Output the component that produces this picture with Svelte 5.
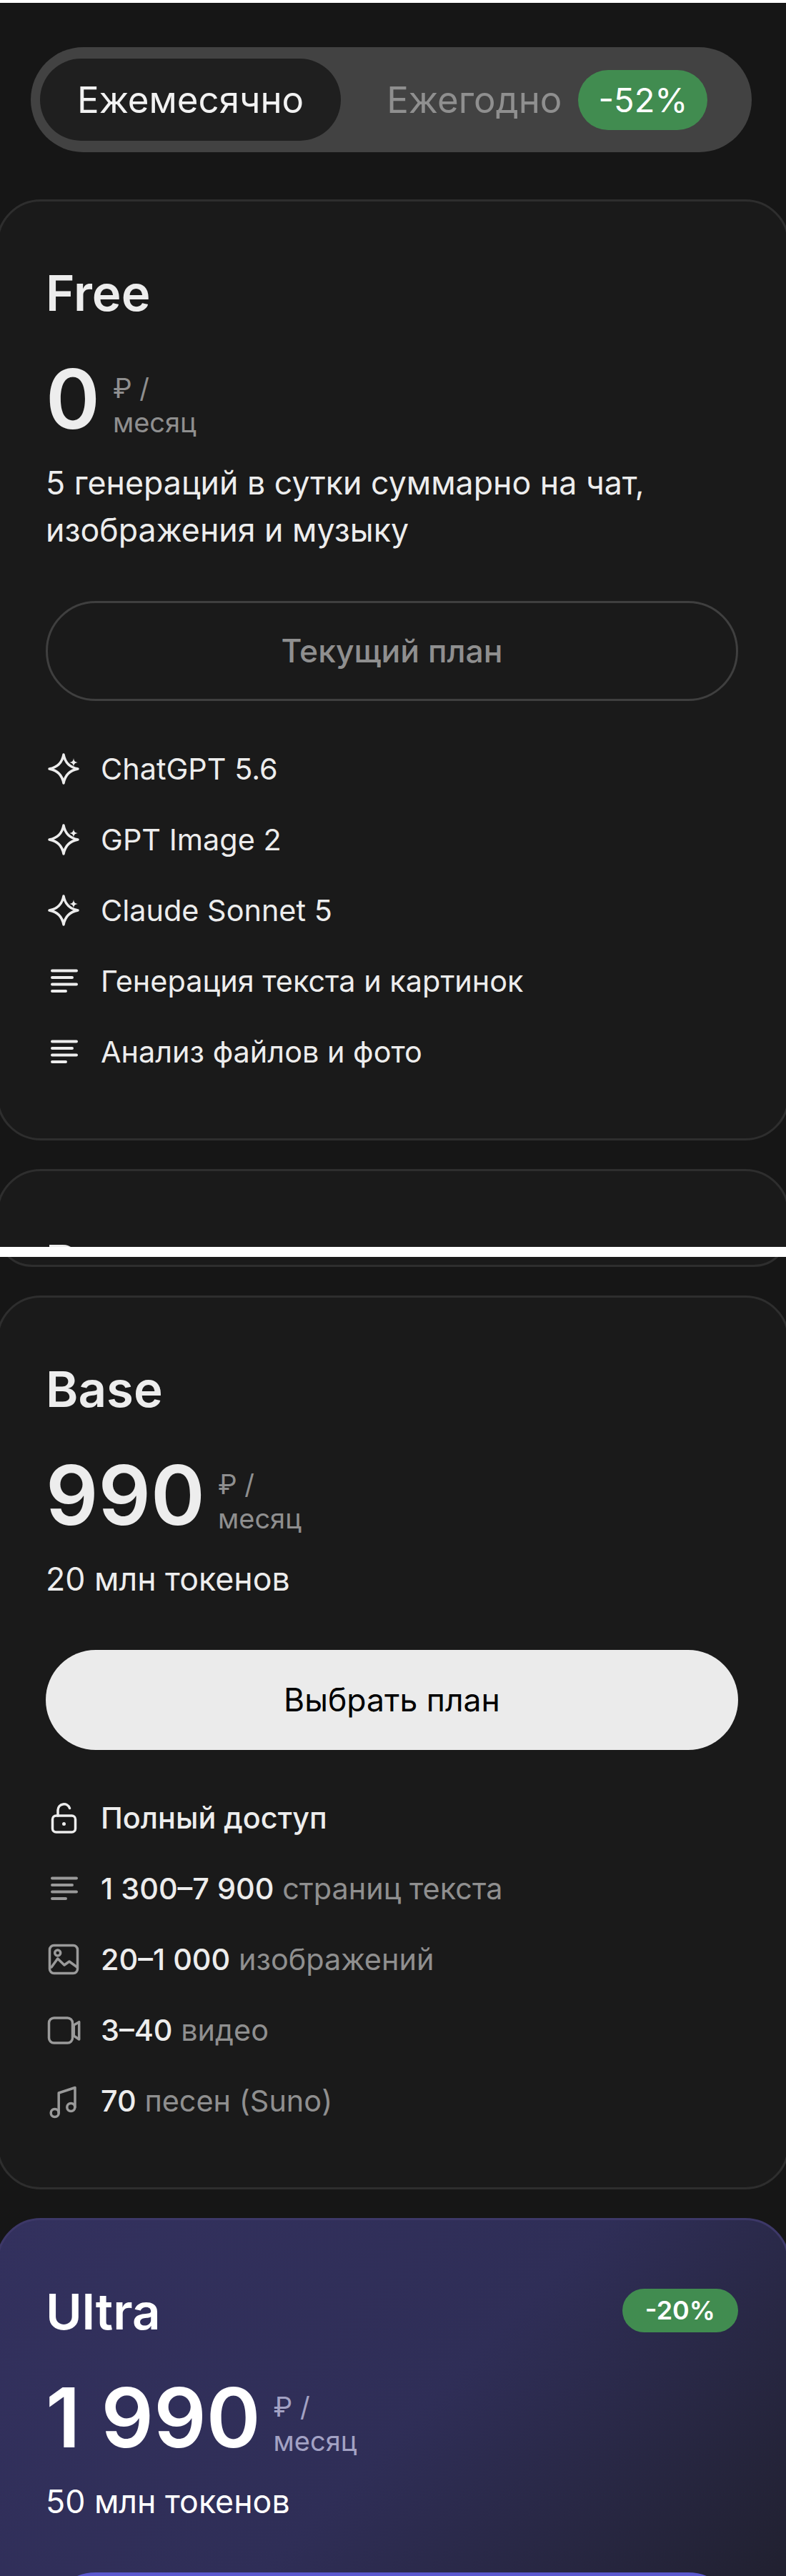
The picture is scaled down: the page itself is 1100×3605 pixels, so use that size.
<script>
  const free = [
    { icon: 'spark', text: 'ChatGPT 5.6' },
    { icon: 'spark', text: 'GPT Image 2' },
    { icon: 'spark', text: 'Claude Sonnet 5' },
    { icon: 'lines', text: 'Генерация текста и картинок' },
    { icon: 'lines', text: 'Анализ файлов и фото' },
  ]
  const base = [
    { icon: 'lock', strong: 'Полный доступ', text: '' },
    { icon: 'lines', strong: '1 300–7 900', text: 'страниц текста', dim: true },
    { icon: 'image', strong: '20–1 000', text: 'изображений', dim: true },
    { icon: 'video', strong: '3–40', text: 'видео', dim: true },
    { icon: 'music', strong: '70', text: 'песен (Suno)', dim: true },
  ]
</script>

{#snippet icon(name, dim)}
  <svg class="ico" class:dim viewBox="0 0 44 44" fill="none" stroke="currentColor" stroke-width="3.5" stroke-linecap="round" stroke-linejoin="round">
    {#if name === 'spark'}
      <path d="M22 2C24 13 31 20 42 22C31 24 24 31 22 42C20 31 13 24 2 22C13 20 20 13 22 2Z" />
      <path fill="currentColor" stroke="none" d="M36 7C36.7 11.3 37.7 12.3 42 13C37.7 13.7 36.7 14.7 36 19C35.3 14.7 34.3 13.7 30 13C34.3 12.3 35.3 11.3 36 7Z" />
    {:else if name === 'lines'}
      <path stroke-width="4" d="M6 7.5H40M6 17H34M6 26.5H40M6 36H25" />
    {:else if name === 'lock'}
      <rect x="6.5" y="19" width="32" height="23" rx="5" />
      <path d="M14 19V11a8.5 8.5 0 0 1 16.5-2.5" />
      <circle cx="22.5" cy="30.5" r="2.5" fill="currentColor" stroke="none" />
    {:else if name === 'image'}
      <rect x="2.5" y="2.5" width="39" height="39" rx="6" />
      <circle cx="13.7" cy="13" r="4" />
      <path d="M5 33L13.7 21L23 30L30 25L41 33" />
    {:else if name === 'video'}
      <rect x="1.5" y="5" width="33" height="35" rx="7" />
      <path d="M36.3 15L43.7 10.7V35L36.3 30Z" />
    {:else if name === 'music'}
      <circle cx="9.7" cy="39" r="5.5" />
      <circle cx="32.3" cy="31" r="5.5" />
      <path d="M15.2 39V11L38 3.5V31" />
    {/if}
  </svg>
{/snippet}

{#snippet price(amount)}
  <div class="price">
    <span class="amount">{amount}</span>
    <span class="unit">₽ /<br />месяц</span>
  </div>
{/snippet}

<div class="page">
  <section class="top">
    <div class="toggle">
      <span class="opt active">Ежемесячно</span>
      <span class="opt">Ежегодно</span>
      <span class="save">-52%</span>
    </div>

    <article class="card">
      <h2>Free</h2>
      {@render price('0')}
      <p class="desc">5 генераций в сутки суммарно на чат, изображения и музыку</p>
      <button class="btn ghost">Текущий план</button>
      <ul>
        {#each free as row}
          <li>{@render icon(row.icon, false)}<span>{row.text}</span></li>
        {/each}
      </ul>
    </article>

    <article class="card cut">
      <h2>Pro</h2>
    </article>
  </section>

  <div class="seam"></div>

  <section class="rest">
    <div class="card tail"></div>

    <article class="card">
      <h2>Base</h2>
      {@render price('990')}
      <p class="desc">20 млн токенов</p>
      <button class="btn solid">Выбрать план</button>
      <ul>
        {#each base as row}
          <li>
            {@render icon(row.icon, row.dim)}
            <span><b>{row.strong}</b>{#if row.text}{' '}<i>{row.text}</i>{/if}</span>
          </li>
        {/each}
      </ul>
    </article>

    <article class="card ultra">
      <div class="head">
        <h2>Ultra</h2>
        <span class="tag">-20%</span>
      </div>
      {@render price('1 990')}
      <p class="desc">50 млн токенов</p>
      <button class="btn accent">Выбрать план</button>
    </article>
  </section>
</div>

<style>
  :global(body) {
    margin: 0;
    background: #161616;
  }

  .page {
    height: 3605px;
    overflow: hidden;
    font-family: Inter, 'Noto Sans', sans-serif;
    color: #ededed;
    background: #161616;
  }

  .top {
    height: 1745px;
    overflow: hidden;
    box-sizing: border-box;
    border-top: 4px solid #fff;
    padding-top: 62px;
  }

  .seam {
    height: 14px;
    background: #fff;
  }

  .rest {
    overflow: hidden;
  }

  .toggle {
    display: flex;
    align-items: center;
    box-sizing: border-box;
    height: 147px;
    margin: 0 48px 66px 43px;
    padding: 0 13px;
    border-radius: 74px;
    background: #424242;
  }

  .opt {
    font-size: 51px;
    line-height: 115px;
    color: #8f8f8f;
    padding: 0 50px 0 51px;
    margin-right: 13px;
  }

  .opt.active {
    padding: 0 52px;
    border-radius: 58px;
    background: #1f1f1f;
    color: #f2f2f2;
  }

  .save {
    margin-left: -40px;
    padding: 0 28px;
    border-radius: 42px;
    font-size: 47px;
    line-height: 84px;
    color: #fff;
    background: #418c50;
  }

  .card {
    box-sizing: border-box;
    margin: 0 -5px 40px;
    padding: 88px 69px 96px 66px;
    border: 3px solid #2e2e2e;
    border-radius: 62px;
    background: #1a1a1a;
  }

  .cut {
    height: 400px;
    margin-bottom: 0;
  }

  .tail {
    height: 100px;
    margin-top: -86px;
    padding: 0;
  }

  h2 {
    margin: 0 0 44px;
    font-size: 69px;
    line-height: 80px;
    font-weight: 600;
    color: #ededed;
  }

  .price {
    display: flex;
    align-items: center;
    gap: 18px;
    height: 130px;
    margin-bottom: 19px;
  }

  .amount {
    font-size: 115px;
    line-height: 130px;
    font-weight: 600;
    white-space: pre;
  }

  .unit {
    margin-top: 16px;
    font-size: 38px;
    line-height: 48px;
    color: #8f8f8f;
  }

  .desc {
    margin: 0 0 66px;
    font-size: 44.7px;
    line-height: 66px;
    color: #ededed;
  }

  .btn {
    display: block;
    width: 100%;
    height: 140px;
    margin: 0 0 70px;
    padding: 0;
    border: 3px solid #3f3f3f;
    border-radius: 70px;
    font: inherit;
    font-size: 44.5px;
    background: none;
  }

  .ghost {
    font-weight: 500;
    color: #8f8f8f;
  }

  .solid {
    border: none;
    color: #000;
    background: #ebebeb;
  }

  .accent {
    border: none;
    color: #fff;
    background: #5b58cf;
  }

  ul {
    display: flex;
    flex-direction: column;
    gap: 49px;
    margin: 0;
    padding: 0;
    list-style: none;
  }

  li {
    display: flex;
    align-items: center;
    gap: 30px;
    height: 50px;
    font-size: 41.4px;
    line-height: 50px;
    white-space: nowrap;
  }

  .ico {
    flex: none;
    width: 44px;
    height: 44px;
    margin-left: 3px;
    color: #ededed;
    overflow: visible;
  }

  .ico.dim {
    color: #9a9a9a;
  }

  b {
    font-weight: 500;
  }

  i {
    font-style: normal;
    color: #8f8f8f;
  }

  .ultra {
    border-color: #3d3868;
    background: linear-gradient(135deg, #33315e 0%, #2f2e57 45%, #1b1b20 100%);
  }

  .ultra h2,
  .ultra .amount,
  .ultra .desc {
    color: #fff;
  }

  .ultra .unit {
    color: #a3a2c4;
  }

  .head {
    display: flex;
    justify-content: space-between;
    align-items: flex-start;
  }

  .tag {
    margin-top: 8px;
    padding: 0 32px;
    border-radius: 31px;
    font-size: 36px;
    line-height: 61px;
    font-weight: 600;
    color: #fff;
    background: #418c50;
  }
</style>
